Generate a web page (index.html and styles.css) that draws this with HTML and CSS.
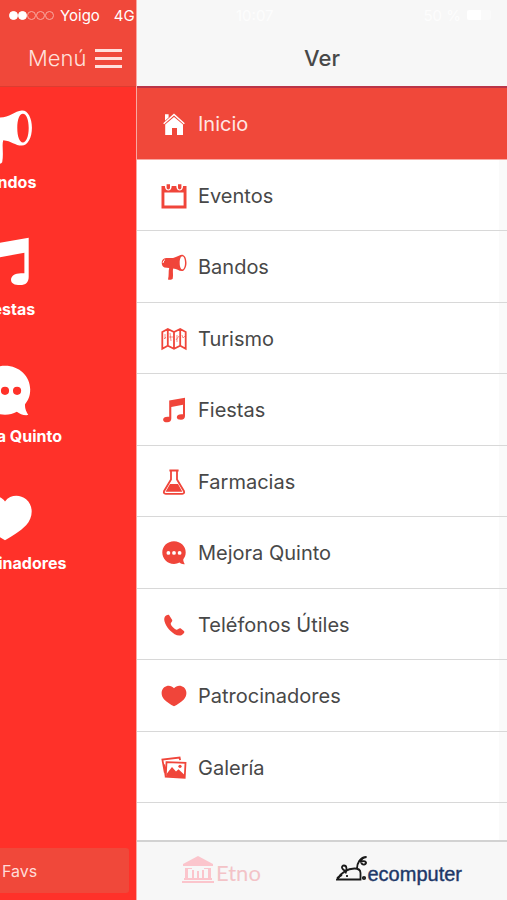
FILE: index.html
```html
<!DOCTYPE html>
<html lang="es">
<head>
<meta charset="utf-8">
<meta name="viewport" content="width=device-width, initial-scale=1">
<title>Menú</title>
<link rel="stylesheet" href="styles.css">
</head>
<body>
<svg class="sprite" aria-hidden="true">
  <symbol id="i-home" viewBox="0 0 26 26"><path d="M13 2.500 2.200 12.200 3.200 13.300 13 4.600l9.800 8.700 1-1.100z"/><path d="M4 3.200h3.600v3.300L4 9.700zM13 6l9 7.600V24h-6v-7h-5v7H4.200V13.600z"/></symbol>
  <symbol id="i-calendar" viewBox="0 0 26 26"><path fill-rule="evenodd" d="M.5 3h3.400c0 6 6.800 6 6.800 0h4.600c0 6 6.800 6 6.800 0h3.400v22.500H.5zM3.400 9.600v12.900h19.200V9.600z"/><path d="M5.600 1.200h3.400v3.600a1.700 1.700 0 0 1-3.400 0zM17 1.200h3.400v3.600a1.700 1.700 0 0 1-3.400 0z"/></symbol>
  <symbol id="i-horn" viewBox="0 0 26 26"><path fill-rule="evenodd" d="M3.200 4.400C6 3.600 8 4 10.500 4 15 4 17.500 1 20.800.7c2.800-.2 4.700 3.500 4.700 8s-1.900 8.300-4.700 8.300c-3 0-5-2.200-8.600-2.500-.8 2.500.3 5.500-.5 10.200-1 1.300-3.600 1.300-4.700.7 1.200-4 .2-8 1.200-11.300l-4.700-.5C-.2 12.300-.1 5.500 3.200 4.400zM21.300 2.200c-1.600 0-2.600 2.800-2.600 6.600s1 6.700 2.600 6.700 2.700-2.900 2.700-6.700-1.100-6.600-2.700-6.600z"/><path class="cut" d="M2 9q.3-2.500 2-3.300"/></symbol>
  <symbol id="i-map" viewBox="0 0 26 26"><path class="line" d="M1.300 6 6.800 3l6.200 3 6.200-3 5.500 3v16.700l-5.500-3-6.200 3-6.200-3-5.500 3zM6.800 3v16.700M13 6v16.700M19.200 3v16.700"/><path class="thin" d="M3 13l2-2M4 8v5m4-2h4M9 7l1 8m5-1 3-4m-2-1v7m5-7 1 3 2-2"/></symbol>
  <symbol id="i-music" viewBox="0 0 26 26"><path d="M8.200 3.500 24 .8V19c0 2.300-1.300 3.800-4 3.800-2.600 0-4.200-.8-4.200-2.500s1.800-3 4.600-3h1.600V7.800L10.300 9.900v11.600c0 2.300-1.300 3.800-4 3.800-2.600 0-4.200-.9-4.200-2.600s1.700-2.900 4.500-2.900h1.600z"/></symbol>
  <symbol id="i-flask" viewBox="0 0 26 26"><path class="line" d="M8.400 1.500h9.200M10 2v8.400L3 22.200q-.8 2.500 1.700 2.600h16.600q2.500-.1 1.700-2.600L16 10.400V2"/><path d="M9 15h8l4.400 7.700H4.600z"/></symbol>
  <symbol id="i-chat" viewBox="0 0 26 26"><path fill-rule="evenodd" d="M13 1.300c6.800 0 11.700 5 11.700 11 0 3.300-1 5-2.400 6.900-.2 1.900.6 3.400 1.500 5-2.200.3-4-.6-5.300-1.600-1.700.9-3.400 1.400-5.500 1.400C6.200 24 1.300 18.700 1.300 12.600S6.200 1.300 13 1.300zM7.400 11a1.900 1.900 0 1 0 0 3.800 1.900 1.900 0 0 0 0-3.800zm5.600 0a1.900 1.900 0 1 0 0 3.800 1.900 1.900 0 0 0 0-3.800zm5.600 0a1.900 1.900 0 1 0 0 3.800 1.900 1.900 0 0 0 0-3.800z"/></symbol>
  <symbol id="i-phone" viewBox="0 0 26 26"><path d="M4 4.500C5.500 3 7.200 2.200 8.200 3.200l3 4.800c.7 1.500-1.700 2.600-1.500 4.100.7 2.200 3.400 4.900 5.600 5.600 1.500.3 2.700-2 4.200-1.400l3.400 2.600c1.300 1.200-.4 3-2 4-3.500 2-8.200-.8-11.600-4.200C5.500 15 1.500 8 4 4.500z"/></symbol>
  <symbol id="i-heart" viewBox="0 0 26 26"><path d="M13 5.300C15.500 2 20 2 22.800 4.300c3.700 3.200 3.200 8.700 0 12.100-2.900 3-6.400 4.900-9.800 6.900-3.400-2-6.900-3.900-9.800-6.900C0 13-.5 7.500 3.200 4.300 6 2 10.500 2 13 5.300z"/></symbol>
  <symbol id="i-gallery" viewBox="0 0 26 26"><path class="line" d="M3.800 17.700 1.400 4.600l17.200-2 .5 2.600M5.500 7.200l19 .6-.8 14.900-19-1zM3 9.500l1.700 12"/><path d="M5.500 19 11 12l4 4.500 2.500-2.300 5.600 5.200v2.800L5.300 21.500z"/><circle cx="19" cy="11.300" r="1.600"/></symbol>
</svg>

<div class="app">
  <section class="page">
    <header class="page-top">
      <div class="status">
        <span class="signal"><i class="on"></i><i class="on"></i><i></i><i></i><i></i></span>
        <span>Yoigo</span>
        <span class="network">4G</span>
      </div>
      <button class="menu-button" type="button">Menú <span class="bars"></span></button>
    </header>
    <main class="tiles">
      <a class="tile" href="#bandos"><svg><use href="#i-horn"/></svg>Bandos</a>
      <a class="tile" href="#fiestas"><svg><use href="#i-music"/></svg>Fiestas</a>
      <a class="tile" href="#mejora"><svg><use href="#i-chat"/></svg>Mejora Quinto</a>
      <a class="tile" href="#patrocinadores"><svg><use href="#i-heart"/></svg>Patrocinadores</a>
    </main>
    <button class="favs" type="button">Favs</button>
  </section>

  <aside class="drawer">
    <header class="drawer-top">
      <div class="status faint">
        <span class="time">10:07</span>
        <span>50 %</span>
        <span class="battery"></span>
      </div>
      <h1>Ver</h1>
    </header>
    <nav>
      <ul class="menu">
        <li><a class="active" href="#inicio"><svg><use href="#i-home"/></svg>Inicio</a></li>
        <li><a href="#eventos"><svg><use href="#i-calendar"/></svg>Eventos</a></li>
        <li><a href="#bandos"><svg><use href="#i-horn"/></svg>Bandos</a></li>
        <li><a href="#turismo"><svg><use href="#i-map"/></svg>Turismo</a></li>
        <li><a href="#fiestas"><svg><use href="#i-music"/></svg>Fiestas</a></li>
        <li><a href="#farmacias"><svg><use href="#i-flask"/></svg>Farmacias</a></li>
        <li><a href="#mejora"><svg><use href="#i-chat"/></svg>Mejora Quinto</a></li>
        <li><a href="#telefonos"><svg><use href="#i-phone"/></svg>Teléfonos Útiles</a></li>
        <li><a href="#patrocinadores"><svg><use href="#i-heart"/></svg>Patrocinadores</a></li>
        <li><a href="#galeria"><svg><use href="#i-gallery"/></svg>Galería</a></li>
      </ul>
    </nav>
    <footer class="sponsors">
      <a class="etno" href="#etno">
        <svg viewBox="0 0 32 28"><path d="M16 0 31 8v2H1V8zM3 12h3v11H3zM26 12h3v11h-3zM10 14h2v9h-2zM15 15h2v8h-2zM20 14h2v9h-2zM3 12h7v1H3zM22 12h7v1h-7zM2 22h28v2H2zM0 25h32v2H0z"/></svg>Etno</a>
      <a class="ecomputer" href="#ecomputer">
        <svg viewBox="0 0 32 26"><path d="M1 23.500h23.500V17c0-3.500-3-4.500-6-4.500C11 12.500 5 17 1 23.500zM10.500 15C5 14 5 9.500 8 9.500s3 4 1.500 8M21 12.500c0-5 3-11.500 9.500-11.500-8 1.500-6 8-2.300 7.500 3.300-.5 2.300-5-4.200-2.500"/><path d="M11 19v2M1 22l5-3"/><circle cx="28" cy="22" r="1.200"/></svg>ecomputer</a>
    </footer>
  </aside>
</div>
</body>
</html>
```
FILE: styles.css
```css
* {
  box-sizing: border-box;
}

body {
  margin: 0;
  font-family: Inter, "Liberation Sans", sans-serif;
  color: #484848;
  background: #fff;
}

a {
  color: inherit;
  text-decoration: none;
}

button {
  border: 0;
  font: inherit;
  color: inherit;
}

svg {
  fill: currentColor;
  flex: none;
}

.sprite {
  display: none;
}

.line,
.thin,
.cut {
  fill: none;
  stroke: currentColor;
  stroke-width: 1.8;
}

.thin {
  stroke-width: 0.6;
}

.cut {
  stroke: #fff;
  stroke-width: 1;
}

.app {
  display: grid;
  grid-template-columns: 136px minmax(0, 1fr);
  min-height: 100vh;
}

.page {
  display: flex;
  flex-direction: column;
  overflow: hidden;
  color: #fff;
  background: #ff3129;
}

.page-top {
  height: 87px;
  background: #f0483a;
  border-bottom: 1px solid #dd3c30;
}

.status {
  display: flex;
  align-items: center;
  gap: 6px;
  height: 30px;
  padding-left: 9px;
  font-size: 15px;
  white-space: nowrap;
}

.signal {
  display: flex;
}

.signal i {
  width: 9px;
  height: 9px;
  border: 1px solid #f9aaa2;
  border-radius: 50%;
}

.signal .on {
  background: #fff;
  border-color: #fff;
}

.network {
  margin-left: 8px;
}

.menu-button {
  display: flex;
  align-items: center;
  gap: 9px;
  height: 56px;
  margin-left: 28px;
  padding: 0;
  background: none;
  color: #ffe0dc;
  font-size: 22px;
  font-weight: 300;
}

.bars {
  width: 27px;
  height: 19px;
  background: linear-gradient(#ffe0dc 0 3px, transparent 3px 8px, #ffe0dc 8px 11px, transparent 11px 16px, #ffe0dc 16px);
}

.tiles {
  display: grid;
  grid-auto-rows: 127px;
  flex: 1;
  width: 140px;
  margin-left: -63px;
  padding-top: 22px;
}

.tile {
  display: flex;
  flex-direction: column;
  align-items: center;
  gap: 7px;
  font-size: 16px;
  line-height: 20px;
  font-weight: 700;
}

.tile svg {
  width: 56px;
  height: 56px;
  margin-right: 4px;
}

.tile .cut {
  stroke: #ff3129;
}

.favs {
  height: 45px;
  margin: 0 7px 7px -4px;
  padding: 0 6px;
  border-radius: 3px;
  background: #f0483a;
  color: #ffdcd8;
  font-size: 16px;
  text-align: left;
}

.drawer {
  display: flex;
  flex-direction: column;
  border-left: 1px solid #f8a8a2;
}

.drawer-top {
  height: 88px;
  background: #f7f7f7;
  border-bottom: 2px solid #b93548;
}

.faint {
  justify-content: flex-end;
  color: #fdfdfd;
  padding-right: 16px;
}

.time {
  margin-right: auto;
  margin-left: 90px;
}

.battery {
  width: 24px;
  height: 10px;
  border-radius: 2px;
  background: linear-gradient(90deg, #fff 60%, #fafafa 60%);
}

h1 {
  margin: 0;
  font-size: 22px;
  line-height: 56px;
  font-weight: 500;
  text-align: center;
}

nav {
  flex: 1;
  background: linear-gradient(270deg, #fafafa 8px, #fff 8px);
}

.menu {
  display: grid;
  grid-auto-rows: 1fr;
  min-height: 715px;
  margin: 0;
  padding: 0;
  list-style: none;
}

.menu a {
  display: flex;
  align-items: center;
  gap: 11px;
  height: 100%;
  padding: 2px 0 0 24px;
  border-bottom: 1px solid #d8d8d8;
  font-size: 20px;
}

.menu svg {
  width: 26px;
  height: 26px;
  color: #f0453a;
}

.menu .active {
  background: #f0483a;
  border-color: #f8a8a2;
  color: #ffe6e3;
}

.menu .active svg {
  color: #fff;
}

.sponsors {
  display: flex;
  justify-content: space-between;
  height: 60px;
  padding: 14px 45px 0;
  border-top: 2px solid #d2d2d2;
  background: #f7f7f7;
}

.sponsors a {
  display: flex;
}

.etno {
  gap: 2px;
  color: #f3c3c7;
  font-family: Lato, "Open Sans", sans-serif;
  font-size: 22px;
  line-height: 34px;
}

.etno svg {
  width: 32px;
  height: 28px;
  fill: #fbc5cc;
}

.sponsors .ecomputer {
  color: #1d3767;
  font-family: "Liberation Sans", sans-serif;
  font-size: 20px;
  line-height: 36px;
  -webkit-text-stroke: 0.4px #1d3767;
}

.ecomputer svg {
  width: 32px;
  height: 26px;
  fill: none;
  stroke: #1a1a1a;
  stroke-width: 1.8;
}
```
